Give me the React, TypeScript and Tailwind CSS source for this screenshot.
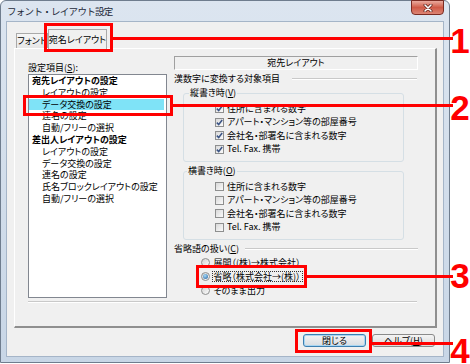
import React from "react";

function CheckBox({ on }: { on: boolean }) {
  return (
    <span className="w-[9px] h-[9px] shrink-0 border border-[#8e8f8f] bg-gradient-to-br from-[#d9d9d9] to-[#fbfbfb] flex items-center justify-center">
      {on && (
        <svg width="7" height="7" viewBox="0 0 7 7">
          <path d="M0.8 3.6 L2.7 5.5 L6.2 1.0" stroke="#3b5485" strokeWidth="1.5" fill="none" />
        </svg>
      )}
    </span>
  );
}

function RadioBtn({ on }: { on?: boolean }) {
  return (
    <span className="w-[9px] h-[9px] shrink-0 rounded-full border border-[#8e8f8f] bg-gradient-to-br from-[#d3d3d3] to-[#fdfdfd] flex items-center justify-center">
      {on && (
        <span className="w-[5px] h-[5px] rounded-full bg-[radial-gradient(circle_at_40%_35%,#a8dcf8,#1d5c9e)]" />
      )}
    </span>
  );
}

function Etched({ className }: { className: string }) {
  return <div className={"h-[2px] border-t border-[#c9c9c9] border-b border-b-white " + className} />;
}

export default function App() {
  const listItems: { t: string; b?: boolean; s?: boolean }[] = [
    { t: "宛先レイアウトの設定", b: true },
    { t: "レイアウトの設定" },
    { t: "データ交換の設定", s: true },
    { t: "連名の設定" },
    { t: "自動/フリーの選択" },
    { t: "差出人レイアウトの設定", b: true },
    { t: "レイアウトの設定" },
    { t: "データ交換の設定" },
    { t: "連名の設定" },
    { t: "氏名ブロックレイアウトの設定" },
    { t: "自動/フリーの選択" },
  ];
  const checks = [
    "住所に含まれる数字",
    "アパート・マンション等の部屋番号",
    "会社名・部署名に含まれる数字",
    "Tel. Fax. 携帯",
  ];

  return (
    <div className="relative w-[470px] h-[364px] bg-white overflow-hidden font-['Noto_Sans_CJK_JP','Noto_Sans',sans-serif] [font-feature-settings:'palt'] text-[9px] leading-[12px] text-black">
      {/* window */}
      <div className="w-[450px] h-[363px] flex flex-col rounded-t-[6px] border border-[#6f7d8e] bg-gradient-to-b from-[#dce5f0] to-[#c8d6e6] px-[5px] pb-[5px]">
        <div className="h-[20px] flex items-start justify-between">
          <span className="pl-[1px] pt-[4px] text-[9.5px] leading-[13px] tracking-[-0.7px] [font-feature-settings:normal] text-[#1e2a3a]">
            フォント・レイアウト設定
          </span>
          <div className="-mt-px w-[33px] h-[15px] rounded-b-[4px] border border-[#7a2b22] bg-gradient-to-b from-[#e9aa9e] via-[#cf5a47] to-[#dc8474] flex items-center justify-center">
            <svg width="10" height="8" viewBox="0 0 10 8">
              <path d="M2 1 L8 7 M8 1 L2 7" stroke="#5a1e16" strokeWidth="3" strokeLinecap="round" />
              <path d="M2 1 L8 7 M8 1 L2 7" stroke="#ffffff" strokeWidth="1.6" strokeLinecap="round" />
            </svg>
          </div>
        </div>

        <div className="flex-1 bg-[#f0f0f0] border border-[#a5b5c8] flex flex-col">
          {/* tabs */}
          <div className="h-[26px] flex items-end pl-[9px]">
            <div className="h-[15px] w-[32px] border border-b-0 border-[#a9a9a9] bg-gradient-to-b from-[#f6f6f6] to-[#e6e6e6] flex items-center justify-center leading-[12px] whitespace-nowrap">
              フォント
            </div>
            <div className="h-[20px] w-[59px] border border-b-0 border-[#a9a9a9] bg-[#f0f0f0] flex items-center justify-center leading-[12px] whitespace-nowrap -mb-px relative">
              宛名レイアウト
            </div>
          </div>

          {/* tab panel */}
          <div className="ml-[7px] w-[423px] h-[280px] border-l border-t border-white border-r-2 border-b-2 border-r-[#8f8f8f] border-b-[#8f8f8f] flex flex-col pl-[13px] pt-[7px]">
            <div className="flex gap-[7px]">
              {/* left column */}
              <div className="w-[139px] flex flex-col pt-[5px]">
                <div className="h-[13px] leading-[13px]">
                  設定項目(<span className="underline">S</span>):
                </div>
                <div className="h-[224px] bg-white border border-[#828790] pr-[2px] flex flex-col">
                  {listItems.map((it, i) => (
                    <div
                      key={i}
                      className={
                        "h-[11.8px] leading-[11.8px] whitespace-nowrap " +
                        (it.b ? "pl-[3px] font-bold " : "pl-[13px] ") +
                        (it.s ? "bg-[#7fe3f7]" : "")
                      }
                    >
                      {it.t}
                    </div>
                  ))}
                </div>
              </div>

              {/* right column */}
              <div className="w-[244px] flex flex-col">
                <div className="h-[14px] border-t border-l border-[#a0a0a0] border-b border-b-white border-r border-r-white flex items-center justify-center leading-[12px]">
                  宛先レイアウト
                </div>
                <div className="mt-[3px] h-[12px] flex items-center">
                  <span className="whitespace-nowrap">漢数字に変換する対象項目</span>
                  <Etched className="flex-1 ml-[12px] mr-[1px]" />
                </div>

                <fieldset className="mt-[2px] ml-[9px] w-[221px] border border-[#d5dfe5] rounded-[3px] p-0 m-0">
                  <legend className="ml-[5px] px-[1px] leading-[12px]">
                    縦書き時(<span className="underline">V</span>)
                  </legend>
                  <div className="pl-[31px] pt-[3px] pb-[5px] flex flex-col">
                    {checks.map((c) => (
                      <div key={c} className="h-[13.5px] flex items-center gap-[3px] whitespace-nowrap">
                        <CheckBox on={true} />
                        <span>{c}</span>
                      </div>
                    ))}
                  </div>
                </fieldset>

                <fieldset className="mt-[3px] ml-[9px] w-[221px] border border-[#d5dfe5] rounded-[3px] p-0 m-0">
                  <legend className="ml-[3px] px-[1px] leading-[12px]">
                    横書き時(<span className="underline">O</span>)
                  </legend>
                  <div className="pl-[31px] pt-[3px] pb-[5px] flex flex-col">
                    {checks.map((c) => (
                      <div key={c} className="h-[13.5px] flex items-center gap-[3px] whitespace-nowrap">
                        <CheckBox on={false} />
                        <span>{c}</span>
                      </div>
                    ))}
                  </div>
                </fieldset>

                <div className="mt-[3px] h-[12px] flex items-center">
                  <span className="whitespace-nowrap">
                    省略語の扱い(<span className="underline">C</span>)
                  </span>
                  <Etched className="flex-1 ml-[6px]" />
                </div>
                <div className="pl-[27px] flex flex-col">
                  <div className="h-[14px] flex items-center">
                    <RadioBtn />
                    <span className="ml-[1.5px] px-[1px] border border-transparent leading-[9px] whitespace-nowrap">
                      展開（(株)→株式会社）
                    </span>
                  </div>
                  <div className="h-[14px] flex items-center">
                    <RadioBtn on />
                    <span className="ml-[1.5px] px-[1px] border border-dotted border-[#333] leading-[9px] whitespace-nowrap">
                      省略（株式会社→(株)）
                    </span>
                  </div>
                  <div className="h-[14px] flex items-center">
                    <RadioBtn />
                    <span className="ml-[1.5px] px-[1px] border border-transparent leading-[9px] whitespace-nowrap">
                      そのまま出力
                    </span>
                  </div>
                </div>
              </div>
            </div>
            <Etched className="mt-[3px] w-[389px]" />
          </div>

          {/* buttons */}
          <div className="mt-[6px] pr-[8px] flex justify-end gap-[6px]">
            <div className="w-[63px] h-[13px] rounded-[3px] border border-[#3c7fb1] bg-gradient-to-b from-[#f4f4f4] to-[#d8dde2] shadow-[inset_0_0_0_1px_#a9d6f2] flex items-center justify-center leading-[11px]">
              閉じる
            </div>
            <div className="w-[63px] h-[13px] rounded-[3px] border border-[#8a8a8a] bg-gradient-to-b from-[#f4f4f4] to-[#dadada] flex items-center justify-center leading-[11px]">
              ヘルプ(<span className="underline">H</span>)
            </div>
          </div>
        </div>
      </div>

      {/* annotations */}
      <div className="absolute left-[44px] top-[23px] w-[69px] h-[29px] border-[3px] border-[#f00]" />
      <div className="absolute left-[113px] top-[37px] w-[340px] h-[3px] bg-[#f00]" />
      <div className="absolute left-[23px] top-[95px] w-[150px] h-[21px] border-[3px] border-[#f00]" />
      <div className="absolute left-[173px] top-[104px] w-[280px] h-[3px] bg-[#f00]" />
      <div className="absolute left-[196px] top-[265px] w-[111px] h-[23px] border-[3px] border-[#f00]" />
      <div className="absolute left-[307px] top-[275px] w-[146px] h-[3px] bg-[#f00]" />
      <div className="absolute left-[295px] top-[329px] w-[77px] h-[24px] border-[3px] border-[#f00]" />
      <div className="absolute left-[372px] top-[342px] w-[81px] h-[3px] bg-[#f00]" />

      <div className="absolute left-[450px] top-[28px] w-[20px] text-center font-['Liberation_Sans',Arial,sans-serif] font-bold text-[35px] leading-[25px] text-[#f00]">1</div>
      <div className="absolute left-[450px] top-[95px] w-[20px] text-center font-['Liberation_Sans',Arial,sans-serif] font-bold text-[35px] leading-[25px] text-[#f00]">2</div>
      <div className="absolute left-[450px] top-[263px] w-[20px] text-center font-['Liberation_Sans',Arial,sans-serif] font-bold text-[35px] leading-[25px] text-[#f00]">3</div>
      <div className="absolute left-[450px] top-[338px] w-[20px] text-center font-['Liberation_Sans',Arial,sans-serif] font-bold text-[35px] leading-[25px] text-[#f00]">4</div>
    </div>
  );
}
